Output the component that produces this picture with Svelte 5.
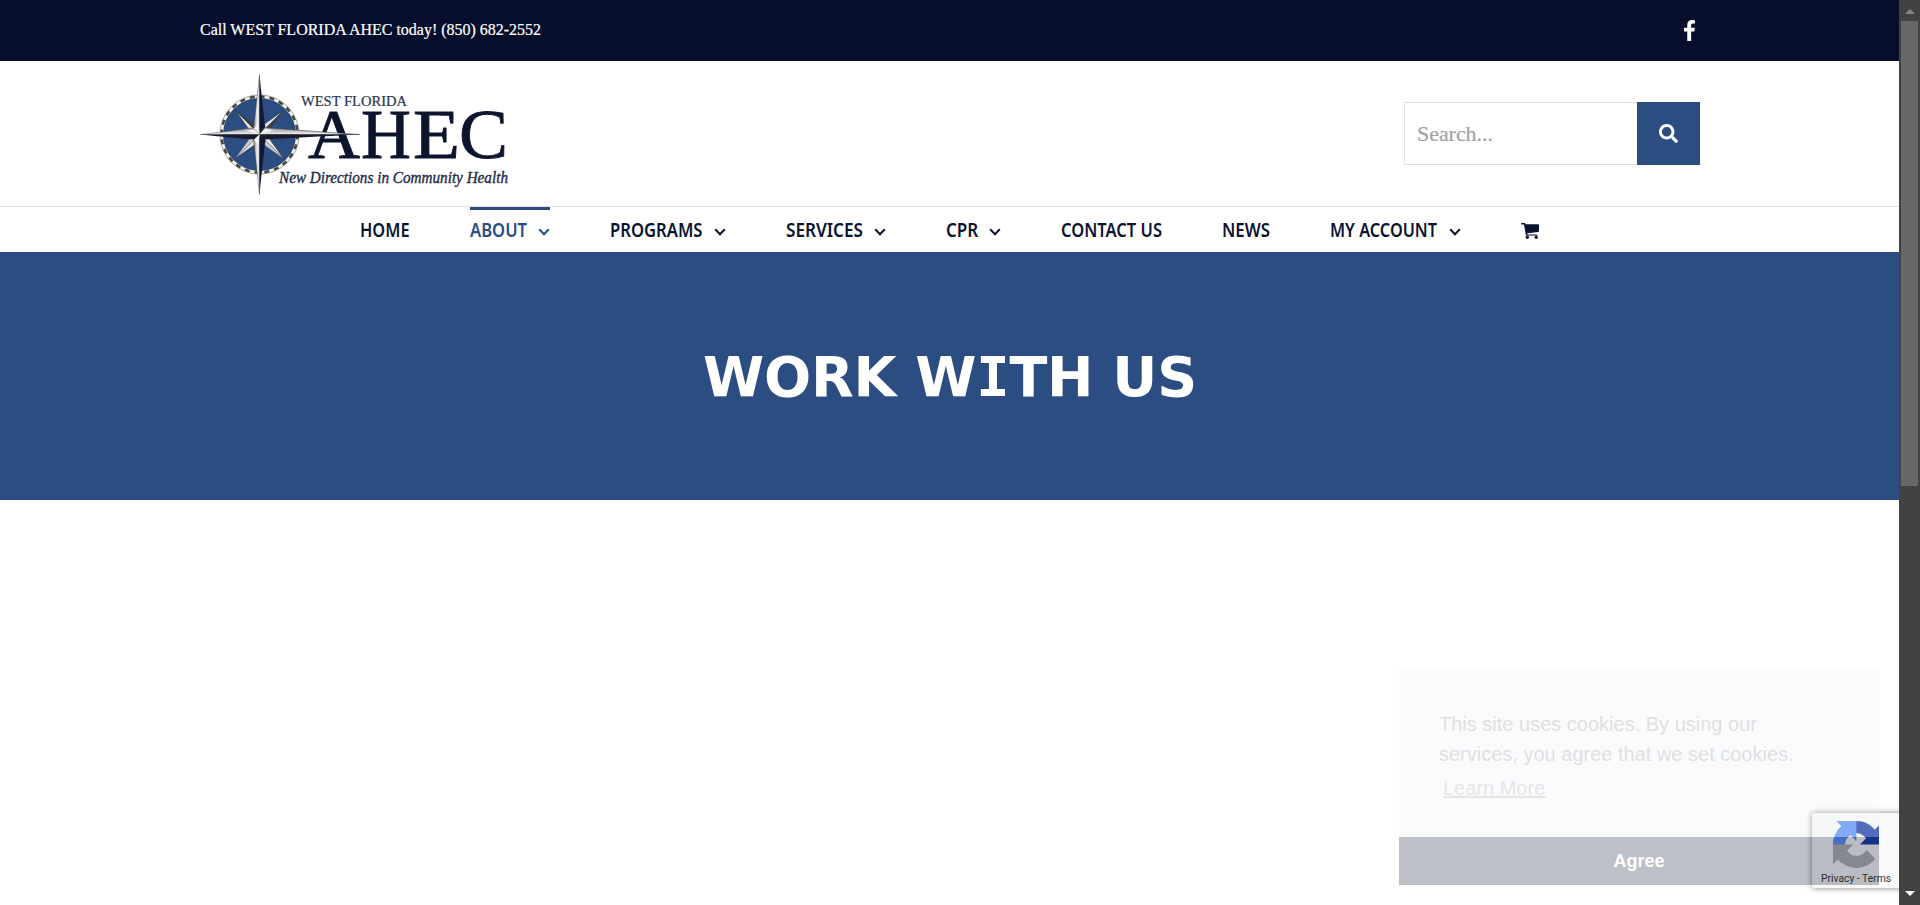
<script>
  const nav = [
    { label: 'HOME', w: 49.5 },
    { label: 'ABOUT', w: 57, arrow: true, active: true },
    { label: 'PROGRAMS', w: 92.5, arrow: true },
    { label: 'SERVICES', w: 77, arrow: true },
    { label: 'CPR', w: 32.3, arrow: true },
    { label: 'CONTACT US', w: 101 },
    { label: 'NEWS', w: 48 },
    { label: 'MY ACCOUNT', w: 107, arrow: true }
  ];
  const ticks = Array.from({ length: 8 }, (_, i) => i * 45);
</script>

{#snippet fit(text, w, h, baseline, cls)}
  <svg class={cls} width={w} height={h}>
    <text x="0" y={baseline} textLength={w} lengthAdjust="spacingAndGlyphs">{text}</text>
  </svg>
{/snippet}

<div class="screen">
  <div class="page">
    <div class="topbar">
      <div class="container">
        {@render fit('Call WEST FLORIDA AHEC today! (850) 682-2552', 341, 30, 19, 'call')}
        <svg class="fb" viewBox="479 0 864 1664" preserveAspectRatio="none"><path fill="#fff" d="M1343 12v264h-157q-86 0-116 36t-30 108v189h293l-39 296h-254v759h-306v-759h-255v-296h255v-218q0-186 104-288.500t277-102.500q147 0 228 12z" /></svg>
      </div>
    </div>

    <header class="header">
      <div class="container">
        <svg class="logo" width="310" height="124" viewBox="200 72 310 124">
          <defs>
            <linearGradient id="metal" x1="0" x2="1" y1="0" y2="0">
              <stop offset="0" stop-color="#777" />
              <stop offset=".6" stop-color="#efefef" />
              <stop offset="1" stop-color="#d4d4d4" />
            </linearGradient>
            <linearGradient id="bar" x1="0" x2="0" y1="0" y2="1">
              <stop offset="0" stop-color="#8a8a8a" />
              <stop offset="1" stop-color="#f4f4f4" />
            </linearGradient>
          </defs>
          <g class="ahec">
            <text y="157.500" x="308" textLength="52" lengthAdjust="spacingAndGlyphs">A</text>
            <text y="157.500" x="361" textLength="50" lengthAdjust="spacingAndGlyphs">H</text>
            <text y="157.500" x="413" textLength="47" lengthAdjust="spacingAndGlyphs">E</text>
            <text y="157.500" x="459" textLength="49" lengthAdjust="spacingAndGlyphs">C</text>
          </g>
          <text class="west" x="301" y="106" textLength="106" lengthAdjust="spacingAndGlyphs">WEST FLORIDA</text>
          <text class="tag" x="279" y="183" textLength="229" lengthAdjust="spacingAndGlyphs">New Directions in Community Health</text>
          <circle cx="259.500" cy="134.500" r="38" fill="#2c4d82" stroke="#eeeeea" stroke-width="3.600" />
          <circle cx="259.500" cy="134.500" r="38" fill="none" stroke="#44443f" stroke-width="2.600" stroke-dasharray="4.970 4.970" />
          <circle cx="259.500" cy="134.500" r="36" fill="none" stroke="#25395f" stroke-width=".7" />
          <circle cx="259.500" cy="134.500" r="39.700" fill="none" stroke="#666" stroke-width=".5" />
          <g transform="translate(259.500 134.500)">
            {#each ticks.filter((t) => t % 90) as t}
              <g transform="rotate({t})">
                <path d="M0-34 L-4.500-7 L0 0Z" fill="#e4e4e4" stroke="#222" stroke-width=".5" />
                <path d="M0-34 L4.500-7 L0 0Z" fill={t > 90 && t < 270 ? '#c8c8c8' : '#3a3e46'} />
              </g>
            {/each}
            <path d="M0-60 Q-3-30-6-5 L0 0Z" fill="url(#metal)" stroke="#555" stroke-width=".5" />
            <path d="M0-60 Q3-30 6-5 L0 0Z" fill="#111936" />
            <path d="M0 60 Q-3 30-6 5 L0 0Z" fill="url(#metal)" stroke="#555" stroke-width=".5" />
            <path d="M0 60 Q3 30 6 5 L0 0Z" fill="#111936" />
            <path d="M-59 0 Q-30-3-5-7 L0 0Z" fill="url(#bar)" stroke="#555" stroke-width=".5" />
            <path d="M-59 0 Q-30 3-5 5 L0 0Z" fill="#171b2c" />
            <path d="M100 0 Q40-4 5-7 L0 0Z" fill="url(#bar)" stroke="#444" stroke-width=".6" />
            <path d="M100 0 Q40 3 5 5 L0 0Z" fill="#171b2c" />
            <path d="M-5.500-6 L0-1 L-1-12Z M-6-5 L-14-4 L0 0Z M6-6 L0 0 L14-4Z M-5.500 5 L0 0 L-1 12Z" fill="#f2f2f2" />
          </g>
        </svg>
        <div class="search">
          <div class="field">{@render fit('Search...', 76, 30, 22, 'ph')}</div>
          <div class="go">
            <svg width="19" height="19" viewBox="0 0 512 512"><path fill="#fff" d="M505 442.700L405.300 343c-4.500-4.500-10.600-7-17-7H372c27.600-35.300 44-79.700 44-128C416 93.100 322.900 0 208 0S0 93.100 0 208s93.100 208 208 208c48.300 0 92.700-16.400 128-44v16.300c0 6.400 2.500 12.500 7 17l99.700 99.700c9.400 9.400 24.600 9.400 33.900 0l28.300-28.300c9.400-9.400 9.400-24.600.1-34zM208 336c-70.700 0-128-57.200-128-128 0-70.700 57.200-128 128-128 70.700 0 128 57.200 128 128 0 70.700-57.200 128-128 128z" /></svg>
          </div>
        </div>
      </div>
    </header>

    <nav class="nav">
      {#each nav as item}
        <div class="item" class:active={item.active}>
          {@render fit(item.label, item.w, 45, 30, 'navtext')}
          {#if item.arrow}
            <svg class="arrow" width="12" height="8" viewBox="0 0 12 8"><path d="M1.200 1.300 6 6.200 10.800 1.300" fill="none" stroke="currentColor" stroke-width="2" /></svg>
          {/if}
        </div>
      {/each}
      <div class="item">
        <svg class="cart" width="18" height="16" viewBox="0 0 18 16"><path fill="currentColor" d="M.6 0H4l.5 1.300H17.200q.8 0 .8.800V8.200q0 .7-.7.800L6.300 10.200l.3 1.200H16.400v1.200H5.600q-.8 0-.8-.8L3 1.500H.6Q0 1.500 0 .8T.6 0Z" /><circle cx="6.300" cy="14.200" r="1.700" fill="currentColor" /><circle cx="15.200" cy="14.200" r="1.700" fill="currentColor" /></svg>
      </div>
    </nav>

    <section class="hero">
      <h1>WORK W<span>I</span>TH US</h1>
    </section>

    <div class="badge">
      <div class="mark">
        <svg width="47" height="47" viewBox="0 0 64 64">
          <path d="M64 31.955l-.033-1.370V4.687l-7.160 7.160C50.948 4.674 42.033.093 32.050.093c-10.400 0-19.622 4.960-25.458 12.640l11.736 11.860a15.550 15.550 0 0 1 4.754-5.334c2.050-1.600 4.952-2.906 8.968-2.906.485 0 .86.057 1.135.163 4.976.393 9.288 3.140 11.828 7.124l-8.307 8.307L64 31.953" fill="#1c3aa9" />
          <path d="M31.862.094l-1.370.033H4.594l7.160 7.160C4.580 13.147 0 22.060 0 32.046c0 10.400 4.960 19.622 12.640 25.458L24.500 45.768a15.550 15.550 0 0 1-5.334-4.754c-1.600-2.050-2.906-4.952-2.906-8.968 0-.485.057-.86.163-1.135.393-4.976 3.140-9.288 7.124-11.828l8.307 8.307L31.860.095" fill="#5b8ff5" />
          <path d="M.001 32.045l.033 1.370v25.898l7.160-7.160c5.860 7.173 14.774 11.754 24.760 11.754 10.400 0 19.622-4.960 25.458-12.640l-11.736-11.860a15.550 15.550 0 0 1-4.754 5.334c-2.050 1.600-4.952 2.906-8.968 2.906-.485 0-.86-.057-1.135-.163-4.976-.393-9.288-3.140-11.828-7.124l8.307-8.307c-10.522.04-22.400.066-27.295-.005" fill="#b2b2b2" />
        </svg>
      </div>
      {@render fit('Privacy - Terms', 70, 14, 11, 'terms')}
    </div>

    <aside class="cookie">
      <div class="msg">
        <p>This site uses cookies. By using our<br />services, you agree that we set cookies.</p>
        <a href="#top">Learn More</a>
      </div>
      <div class="agree"></div>
    </aside>
    <div class="agreelabel">Agree</div>
  </div>

  <div class="scroll">
    <svg width="10" height="5"><path d="M0 5 5 0l5 5z" fill="#858585" /></svg>
    <div class="thumb"></div>
    <svg width="10" height="5"><path d="M0 0h10L5 5z" fill="#fff" /></svg>
  </div>
</div>

<style>
  :global(body) { margin: 0; background: #fff; overflow: hidden; }
  .screen { display: flex; width: 1920px; height: 905px; overflow: hidden; }
  .page { position: relative; width: 1899px; height: 905px; overflow: hidden; background: #fff; }
  svg { display: block; flex: none; overflow: visible; }
  .container { width: 1500px; height: 100%; margin-left: 200px; display: flex; align-items: center; justify-content: space-between; }
  .topbar { height: 61px; background: #060e2b; }
  :global(.call) { font: 16.500px "Liberation Serif", serif; fill: #fff; stroke: #fff; stroke-width: .2px; }
  .fb { width: 11px; height: 21px; margin-right: 5px; }
  .header { height: 145px; border-bottom: 1px solid #e0e0e0; }
  .logo { font-family: "Liberation Serif", serif; fill: #0c142e; }
  .ahec { font-size: 69px; stroke: #0c142e; stroke-width: .8px; }
  .west { font-size: 15.500px; fill: #2b314b; stroke: #2b314b; stroke-width: .2px; }
  .tag { font-size: 17.500px; font-style: italic; fill: #252c48; stroke: #252c48; stroke-width: .4px; }
  .search { display: flex; height: 63px; }
  .field { box-sizing: border-box; width: 233px; border: 1px solid #e0e0e0; border-right: 0; padding: 16px 12px; }
  :global(.ph) { font: 21px "Liberation Serif", serif; fill: #a2a2a5; stroke: #a2a2a5; stroke-width: .2px; }
  .go { width: 63px; display: grid; place-items: center; background: #2c4d82; }
  .nav { display: flex; gap: 60px; height: 45px; padding-left: 360px; color: #0a1431; }
  .item { display: flex; gap: 11.300px; box-sizing: border-box; height: 45px; }
  .active { color: #2c4d82; box-shadow: inset 0 3px #2c4d82; }
  :global(.navtext) { font: 600 19.500px "Noto Sans", sans-serif; fill: currentColor; }
  .arrow { margin-top: 21px; }
  .cart { margin-top: 16px; }
  .hero { height: 248px; background: #2c4d82; display: grid; place-items: center; }
  h1 { margin: 0; padding: 2px 0 0 1px; font: bold 55.500px "DejaVu Sans", sans-serif; line-height: 64px; color: #fff; white-space: nowrap; letter-spacing: -.25px; }
  h1 span { font-family: "DejaVu Sans Mono", monospace; }
  .badge { position: absolute; left: 1812px; top: 813px; width: 320px; height: 75px; box-sizing: border-box; padding: 8px 0 0 9px; border-radius: 3px; background: #f9f9f9; box-shadow: 0 0 6px #808080; }
  .mark { width: 46px; height: 47px; overflow: hidden; margin: 0 0 3px 12px; }
  :global(.terms) { font: 10px Roboto, sans-serif; fill: #333; }
  .cookie { position: absolute; left: 1399px; top: 669px; width: 480px; height: 216px; opacity: .27; background: #ecf2f9; font: 20px/30px "Liberation Sans", sans-serif; color: #8b8b90; }
  .msg { box-sizing: border-box; height: 168px; padding: 40px; }
  p { margin: 0; }
  a { display: inline-block; margin: 4px 0 0 4px; color: #a3a3a8; text-decoration: underline; }
  .agree { height: 48px; background: #0f1a31; }
  .agreelabel { position: absolute; left: 1399px; top: 837px; width: 480px; text-align: center; font: bold 18px/48px "Liberation Sans", sans-serif; color: #fff; }
  .scroll { width: 21px; height: 905px; background: #424242; display: flex; flex-direction: column; align-items: center; box-sizing: border-box; padding: 9px 0; }
  .thumb { width: 17px; height: 465px; margin: 7px 0 auto; background: #686868; }
</style>
